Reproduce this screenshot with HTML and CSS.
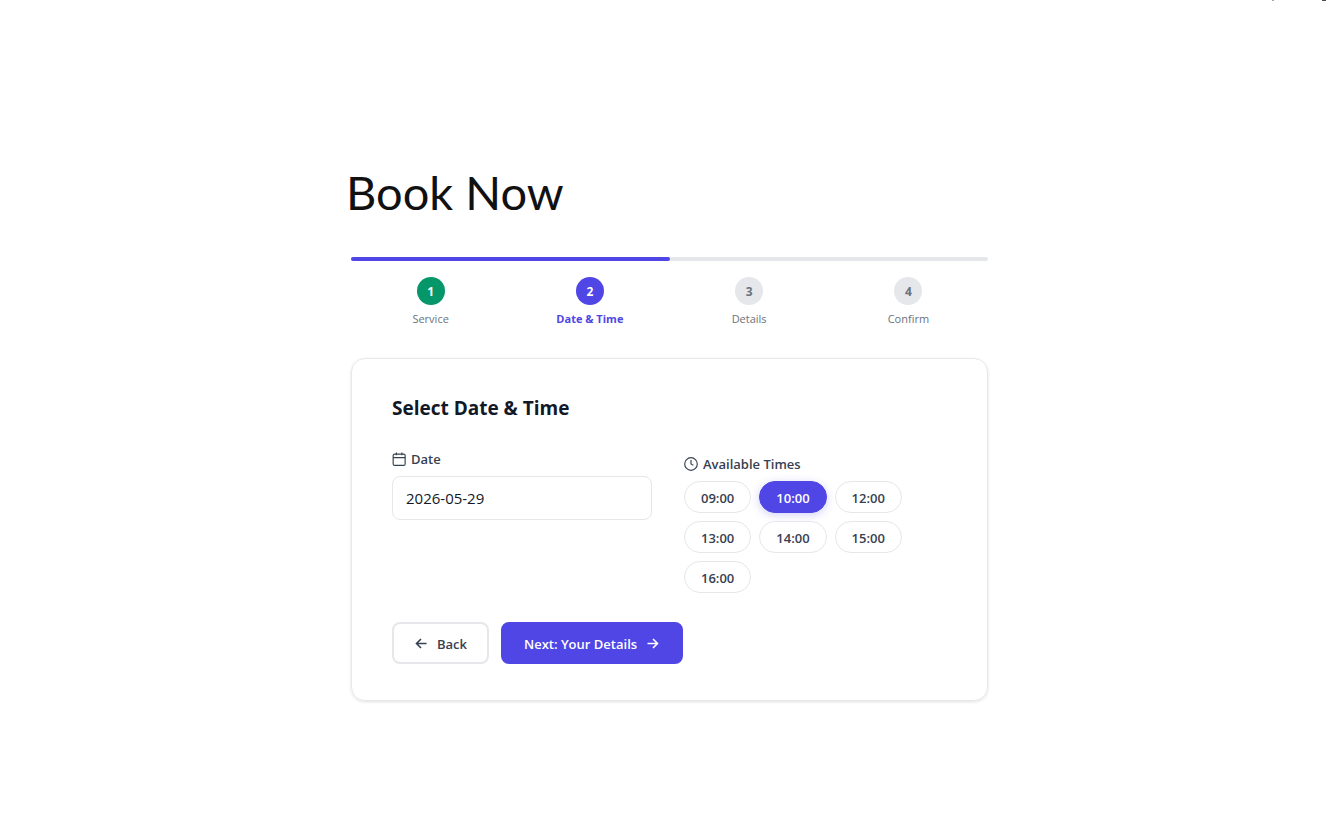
FILE: index.html
```html
<!DOCTYPE html>
<html lang="en">
<head>
<meta charset="utf-8">
<meta name="viewport" content="width=device-width, initial-scale=1">
<title>Book Now</title>
<link rel="stylesheet" href="styles.css">
</head>
<body>
<div class="top-edge">
  <svg class="top-marks" viewBox="0 0 56 1" aria-hidden="true"><path d="M1 0h2v1H1z" opacity=".35"/><path d="M51 0h4v1h-4z" opacity=".7"/></svg>
</div>
<main class="page">
  <h1 class="page-title">Book Now</h1>
  <form class="booking">
    <div class="progress"><div class="progress-fill" style="width: 50%"></div></div>
    <ol class="steps">
      <li class="step step-done"><span class="step-number">1</span><span class="step-label">Service</span></li>
      <li class="step step-active"><span class="step-number">2</span><span class="step-label">Date &amp; Time</span></li>
      <li class="step"><span class="step-number">3</span><span class="step-label">Details</span></li>
      <li class="step"><span class="step-number">4</span><span class="step-label">Confirm</span></li>
    </ol>
    <section class="card">
      <h2 class="card-title">Select Date &amp; Time</h2>
      <div class="fields">
        <div class="field">
          <label class="field-label" for="date">
            <svg class="field-icon" viewBox="0 0 24 24" aria-hidden="true"><rect x="2" y="3.500" width="20.500" height="19.500" rx="2.500"/><path d="M7.500 1v4.500M17 1v4.500M2 9.500h20.500"/></svg>
            Date
          </label>
          <input class="date-input" id="date" type="text" value="2026-05-29">
        </div>
        <div class="field field-times" role="group" aria-labelledby="times-label">
          <div class="field-label" id="times-label">
            <svg class="field-icon" viewBox="0 0 24 24" aria-hidden="true"><circle cx="12" cy="12" r="10.800"/><path d="M12 5v7l4 2"/></svg>
            Available Times
          </div>
          <div class="slots">
            <button class="slot" type="button">09:00</button>
            <button class="slot slot-selected" type="button" aria-pressed="true">10:00</button>
            <button class="slot" type="button">12:00</button>
            <button class="slot" type="button">13:00</button>
            <button class="slot" type="button">14:00</button>
            <button class="slot" type="button">15:00</button>
            <button class="slot" type="button">16:00</button>
          </div>
        </div>
      </div>
      <div class="actions">
        <button class="button button-back" type="button">
          <svg class="button-icon" viewBox="0 0 14 14" aria-hidden="true"><path d="M12.500 6.500H2.500M7 2 2.500 6.500 7 11"/></svg>
          Back
        </button>
        <button class="button button-next" type="button">
          Next: Your Details
          <svg class="button-icon" viewBox="0 0 14 14" aria-hidden="true"><path d="M1.500 6.500h10M7 2l4.500 4.500L7 11"/></svg>
        </button>
      </div>
    </section>
  </form>
</main>
</body>
</html>
```
FILE: styles.css
```css
* {
  box-sizing: border-box;
}

body {
  margin: 0;
  background: #fff;
  color: #374151;
  font-family: "Open Sans", "Noto Sans", sans-serif;
  font-size: 13px;
  line-height: 20px;
}

button,
input {
  font: inherit;
  color: inherit;
}

.top-edge {
  display: flex;
  justify-content: flex-end;
  padding-right: 10px;
}

.top-marks {
  width: 56px;
  height: 1px;
}

.page {
  max-width: 645px;
  margin: 0 auto;
  padding: 163px 0 40px;
}

.page-title {
  margin: 0 0 37px;
  color: #111;
  font-family: Lato, sans-serif;
  font-size: 47px;
  font-weight: 400;
  line-height: 56px;
}

.booking {
  margin: 0 3px 0 5px;
}

.progress {
  height: 4px;
  background: #e5e7eb;
}

.progress,
.progress-fill {
  border-radius: 2px;
}

.progress-fill {
  height: 100%;
  background: #4f46e5;
}

.steps {
  display: flex;
  margin: 16px 0 31px;
  padding: 0;
  list-style: none;
}

.step {
  display: flex;
  flex: 1;
  flex-direction: column;
  align-items: center;
  gap: 6px;
  color: #6b7280;
}

.step-number {
  display: grid;
  place-items: center;
  width: 28px;
  height: 28px;
  padding-top: 1px;
  border-radius: 50%;
  background: #e5e7eb;
  font-size: 12px;
  font-weight: 700;
}

.step-label {
  font-size: 11px;
  line-height: 16px;
}

.step-done .step-number {
  background: #059669;
  color: #fff;
}

.step-active .step-number {
  background: #4f46e5;
  color: #fff;
}

.step-active .step-label {
  color: #4f46e5;
  font-weight: 700;
}

.card {
  padding: 35px 43px 36px 40px;
  border: 1px solid #e5e7eb;
  border-radius: 14px;
  box-shadow: 0 1px 3px rgba(0, 0, 0, 0.12);
}

.card-title {
  margin: 0 0 27px;
  color: #111827;
  font-size: 19px;
  font-weight: 700;
  line-height: 28px;
}

.fields {
  display: grid;
  grid-template-columns: 1fr 1fr;
  gap: 32px;
}

.field-times {
  padding-top: 5px;
}

.field-label {
  display: flex;
  align-items: center;
  gap: 5px;
  margin-bottom: 7px;
  font-weight: 600;
}

.field-icon {
  width: 14px;
  height: 14px;
  fill: none;
  stroke: currentColor;
  stroke-width: 2;
}

.date-input {
  display: block;
  width: 100%;
  height: 44px;
  padding: 0 13px;
  border: 1px solid #e5e7eb;
  border-radius: 8px;
  background: #fff;
  color: #111827;
  font-size: 15px;
}

.slots {
  display: flex;
  flex-wrap: wrap;
  gap: 8px;
}

.slot {
  height: 32px;
  padding: 1px 15px 0;
  border: 1px solid #e5e7eb;
  border-radius: 16px;
  background: #fff;
  font-size: 13px;
  font-weight: 600;
}

.slots .slot {
  padding: 1px 16px 0;
}

.slot-selected {
  border-color: #4f46e5;
  background: #4f46e5;
  color: #fff;
  box-shadow: 0 2px 8px rgba(79, 70, 229, 0.25);
}

.actions {
  display: flex;
  gap: 12px;
  margin-top: 29px;
}

.button {
  display: flex;
  align-items: center;
  gap: 9px;
  height: 42px;
  padding: 1px 20px 0;
  border: 2px solid #4f46e5;
  border-radius: 8px;
  font-weight: 600;
}

.button-back {
  border-color: #e5e7eb;
  background: #fff;
}

.button-next {
  padding: 1px 21px 0;
  background: #4f46e5;
  color: #fff;
}

.button-icon {
  width: 14px;
  height: 14px;
  fill: none;
  stroke: currentColor;
  stroke-width: 1.6;
}
```
